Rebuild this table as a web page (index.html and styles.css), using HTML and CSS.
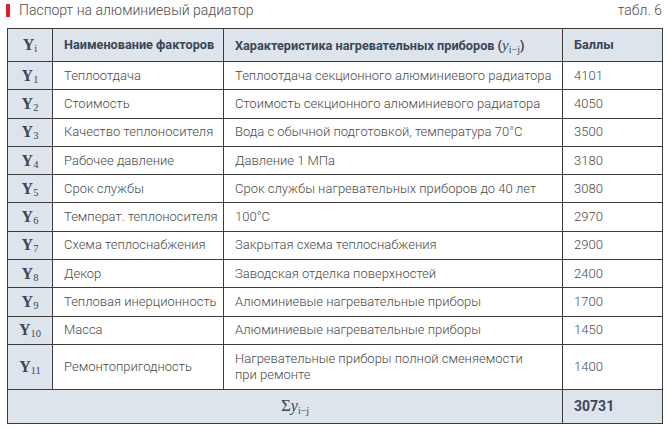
FILE: index.html
```html
<!DOCTYPE html>
<html lang="ru">
<head>
<meta charset="utf-8">
<link rel="stylesheet" href="styles.css">
</head>
<body>
<div class="page">
  <div class="caption">
    <div class="title"><span class="mark"></span>Паспорт на алюминиевый радиатор</div>
    <div class="tabl">табл. 6</div>
  </div>
  <table class="passport">
    <colgroup>
      <col class="c1"><col class="c2"><col class="c3"><col class="c4">
    </colgroup>
    <thead>
      <tr class="head">
        <th class="yi">Y<sub>i</sub></th>
        <th>Наименование факторов</th>
        <th>Характеристика нагревательных приборов (<i class="var">y</i><sub class="vs">i−j</sub>)</th>
        <th>Баллы</th>
      </tr>
    </thead>
    <tbody>
      <tr><td class="yi">Y<sub>1</sub></td><td>Теплоотдача</td><td>Теплоотдача секционного алюминиевого радиатора</td><td>4101</td></tr>
      <tr><td class="yi">Y<sub>2</sub></td><td>Стоимость</td><td>Стоимость секционного алюминиевого радиатора</td><td>4050</td></tr>
      <tr><td class="yi">Y<sub>3</sub></td><td>Качество теплоносителя</td><td>Вода с обычной подготовкой, температура 70°C</td><td>3500</td></tr>
      <tr><td class="yi">Y<sub>4</sub></td><td>Рабочее давление</td><td>Давление 1 МПа</td><td>3180</td></tr>
      <tr><td class="yi">Y<sub>5</sub></td><td>Срок службы</td><td>Срок службы нагревательных приборов до 40 лет</td><td>3080</td></tr>
      <tr><td class="yi">Y<sub>6</sub></td><td>Температ. теплоносителя</td><td>100°C</td><td>2970</td></tr>
      <tr><td class="yi">Y<sub>7</sub></td><td>Схема теплоснабжения</td><td>Закрытая схема теплоснабжения</td><td>2900</td></tr>
      <tr><td class="yi">Y<sub>8</sub></td><td>Декор</td><td>Заводская отделка поверхностей</td><td>2400</td></tr>
      <tr><td class="yi">Y<sub>9</sub></td><td>Тепловая инерционность</td><td>Алюминиевые нагревательные приборы</td><td>1700</td></tr>
      <tr><td class="yi">Y<sub>10</sub></td><td>Масса</td><td>Алюминиевые нагревательные приборы</td><td>1450</td></tr>
      <tr class="tall"><td class="yi">Y<sub>11</sub></td><td>Ремонтопригодность</td><td class="two">Нагревательные приборы полной сменяемости<br>при ремонте</td><td>1400</td></tr>
    </tbody>
    <tfoot>
      <tr class="sum">
        <td colspan="3" class="sigma">Σ<i class="var">y</i><sub class="vs">i−j</sub></td>
        <td class="total">30731</td>
      </tr>
    </tfoot>
  </table>
</div>
</body>
</html>
```
FILE: styles.css
```css
html, body {
  margin: 0;
  padding: 0;
  background: #ffffff;
}

.page {
  width: 655px;
  padding: 0 0 0 7px;
  font-family: Roboto, "Liberation Sans", sans-serif;
  color: #4a4a4a;
}

.caption {
  display: flex;
  justify-content: space-between;
  align-items: flex-end;
  height: 19px;
  margin-bottom: 9px;
}

.title {
  display: flex;
  align-items: center;
  font-size: 14px;
  font-weight: 300;
  color: #4d4d4d;
  margin-left: -1px;
  line-height: 18px;
}

.mark {
  display: inline-block;
  width: 4px;
  height: 13px;
  background: #e0202e;
  margin-right: 9px;
}

.tabl {
  font-size: 14px;
  font-weight: 300;
  color: #4d4d4d;
  line-height: 18px;
}

.passport {
  width: 655px;
  table-layout: fixed;
  border-collapse: collapse;
  border: 1px solid #3c3c3c;
}

.c1 { width: 45px; }
.c2 { width: 171px; }
.c3 { width: 339px; }
.c4 { width: 100px; }

.passport th,
.passport td {
  border: 1px solid #3c3c3c;
  padding: 0 0 0 11px;
  text-align: left;
  vertical-align: middle;
  font-size: 13px;
  font-weight: 300;
  color: #4a4a4a;
  white-space: nowrap;
  line-height: 16px;
}

.passport th {
  background: #dde4eb;
  font-weight: 700;
  color: #3a4756;
  font-size: 12.7px;
}

.head { height: 33px; }
tbody tr { height: 28.3px; }
tbody tr.tall { height: 45px; }
.sum { height: 34px; }

.passport .yi {
  background: #dde4eb;
  text-align: center;
  padding: 0;
  font-family: "Liberation Serif", "DejaVu Serif", serif;
  font-size: 16px;
  font-weight: 700;
  color: #3a4756;
}

.yi sub {
  font-size: 10.5px;
  font-weight: 400;
  vertical-align: -2px;
  line-height: 0;
}

.var {
  font-family: "Liberation Serif", serif;
  font-size: 15px;
  font-weight: 400;
}

.vs {
  font-family: "Liberation Serif", serif;
  font-size: 10px;
  font-weight: 400;
  vertical-align: -3px;
  line-height: 0;
}

.passport .two {
  white-space: normal;
  line-height: 16px;
}

.sum td {
  background: #dde4eb;
}

.passport .sigma {
  text-align: center;
  padding: 0 0 0 20px;
  font-family: "Liberation Serif", serif;
  font-size: 17px;
  font-weight: 400;
  color: #3a4756;
}

.sigma .var {
  font-size: 16px;
}

.passport .total {
  font-weight: 700;
  font-size: 14px;
  color: #3a4756;
}
```
